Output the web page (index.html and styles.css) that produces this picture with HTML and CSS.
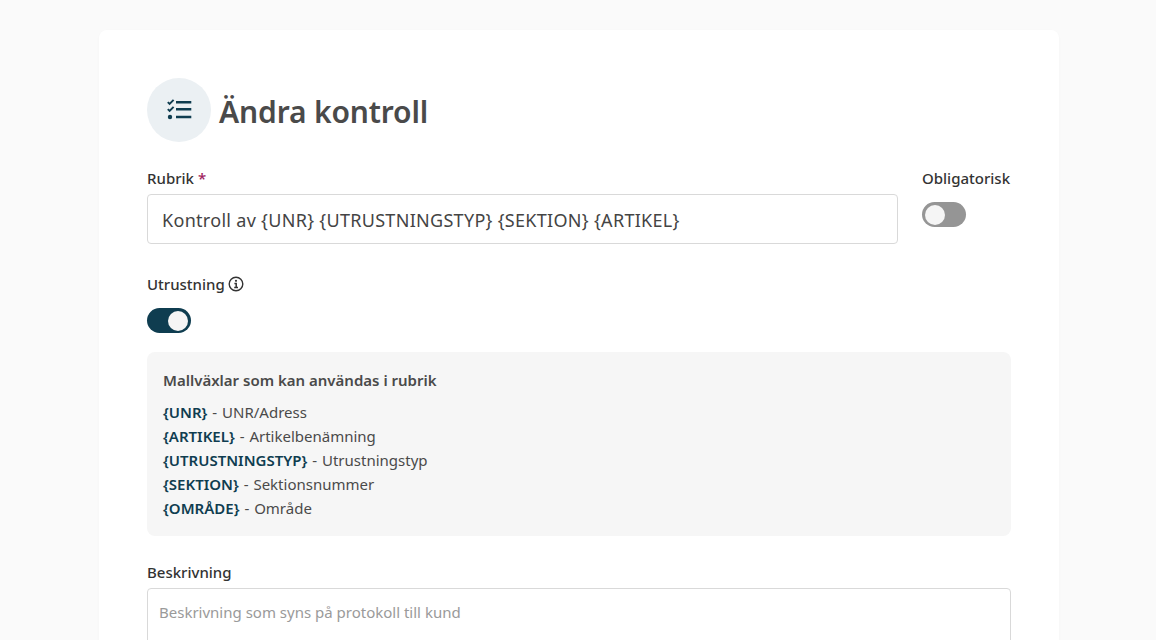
FILE: index.html
```html
<!DOCTYPE html>
<html lang="sv">

<head>
  <meta charset="UTF-8">
  <meta name="viewport" content="width=device-width, initial-scale=1.0">
  <title>Ändra kontroll</title>
  <link rel="stylesheet" href="styles.css">
</head>

<body>
  <div class="card">
    <div class="page-title">
      <div class="title-icon">
        <svg width="26" height="26" viewBox="0 0 26 26" fill="none" stroke="#0f3d50">
          <path d="M1.8 5.2l1.8 1.8 4-4.2M1.8 12.2l1.8 1.8 4-4.2" stroke-width="1.9" />
          <circle cx="4" cy="20" r="2.2" fill="#0f3d50" stroke="none" />
          <path d="M10 5.2h15.3M10 12.2h15.3M10 20h15.3" stroke-width="2.4" />
        </svg>
      </div>
      <h1>Ändra kontroll</h1>
    </div>

    <div class="top-row">
      <div class="field-main">
        <label class="label">Rubrik <span class="required">*</span></label>
        <input class="text-input" type="text" value="Kontroll av {UNR} {UTRUSTNINGSTYP} {SEKTION} {ARTIKEL}">
      </div>
      <div class="field-side">
        <label class="label label-side">Obligatorisk</label>
        <span class="switch"></span>
      </div>
    </div>

    <div class="equipment">
      <label class="label label-icon">Utrustning
        <svg width="16" height="16" viewBox="0 0 16 16" fill="none" stroke="#333">
          <circle cx="8" cy="8" r="6.8" stroke-width="1.4" />
          <circle cx="8" cy="4.8" r="1.1" fill="#333" stroke="none" />
          <path d="M6.4 7.4H8.2V11.4M6.2 11.6H10" stroke-width="1.5" />
        </svg>
      </label>
      <span class="switch on"></span>
    </div>

    <div class="template-box">
      <h2>Mallväxlar som kan användas i rubrik</h2>
      <ul>
        <li><b>{UNR}</b> - UNR/Adress</li>
        <li><b>{ARTIKEL}</b> - Artikelbenämning</li>
        <li><b>{UTRUSTNINGSTYP}</b> - Utrustningstyp</li>
        <li><b>{SEKTION}</b> - Sektionsnummer</li>
        <li><b>{OMRÅDE}</b> - Område</li>
      </ul>
    </div>

    <label class="label">Beskrivning</label>
    <textarea class="text-area" rows="4" placeholder="Beskrivning som syns på protokoll till kund"></textarea>
  </div>
</body>

</html>
```

FILE: styles.css
```css
html,
body {
  height: 640px;
  overflow: hidden;
}

body {
  margin: 0;
  padding-top: 30px;
  background: #fafafa;
  font-family: "Noto Sans", Arial, sans-serif;
  color: #333;
}

.card {
  width: 960px;
  margin-left: 99px;
  padding: 48px;
  box-sizing: border-box;
  background: #fff;
  border-radius: 8px;
  box-shadow: 0 1px 3px rgba(0, 0, 0, 0.03);
}

.page-title {
  display: flex;
  align-items: center;
  gap: 8px;
  margin-bottom: 26px;
}

.title-icon {
  width: 64px;
  height: 64px;
  border-radius: 50%;
  background: #ebf0f3;
  display: flex;
  align-items: center;
  justify-content: center;
}

h1 {
  margin: 0;
  padding-top: 2px;
  font-size: 30px;
  font-weight: 600;
  letter-spacing: -0.15px;
  color: #4a4a4a;
}

.top-row {
  display: flex;
  gap: 24px;
}

.field-main {
  flex: 1;
}

.field-side {
  width: 89px;
}

.label {
  display: block;
  font-size: 15px;
  line-height: 20px;
  font-weight: 500;
  color: #333;
  margin-bottom: 6px;
}

.label-side {
  margin-bottom: 14px;
}

.label-icon {
  display: flex;
  align-items: center;
  gap: 3px;
  margin-bottom: 14px;
}

.required {
  color: #a0245e;
}

.text-input {
  display: block;
  width: 100%;
  height: 50px;
  box-sizing: border-box;
  padding: 2px 14px 0;
  border: 1px solid #d9d9d9;
  border-radius: 4px;
  font: 18px "Noto Sans", Arial, sans-serif;
  letter-spacing: 0.3px;
  color: #444;
}

.switch {
  display: block;
  position: relative;
  width: 44px;
  height: 25px;
  border-radius: 13px;
  background: #959595;
}

.switch::after {
  content: "";
  position: absolute;
  top: 2.5px;
  left: 3px;
  width: 20px;
  height: 20px;
  border-radius: 50%;
  background: #f5f5f5;
}

.switch.on {
  background: #0f3d50;
}

.switch.on::after {
  left: 21px;
}

.equipment {
  margin-top: 30px;
}

.template-box {
  margin: 19px 0 26px;
  padding: 17px 16px 16px;
  background: #f6f6f6;
  border-radius: 8px;
  font-size: 15px;
  color: #4a4a4a;
}

.template-box h2 {
  margin: 0 0 9px;
  font-size: 15px;
  line-height: 22px;
  font-weight: 600;
}

.template-box ul {
  margin: 0;
  padding: 0;
  list-style: none;
}

.template-box li {
  line-height: 24px;
  word-spacing: 1px;
}

.template-box b {
  font-weight: 600;
  color: #0f3d50;
}

.text-area {
  display: block;
  width: 100%;
  box-sizing: border-box;
  padding: 12px 11px;
  border: 1px solid #d9d9d9;
  border-radius: 4px;
  font: 15px/22px "Noto Sans", Arial, sans-serif;
  resize: none;
}

.text-area::placeholder {
  color: #9a9a9a;
}
```
